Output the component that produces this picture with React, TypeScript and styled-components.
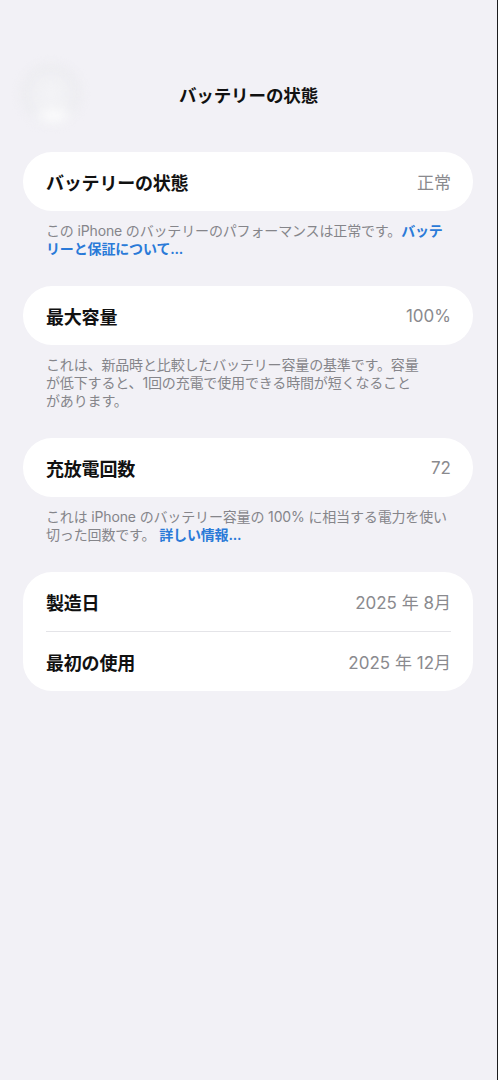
import React from "react";
import styled, { createGlobalStyle } from "styled-components";

const GlobalStyle = createGlobalStyle`
  html, body {
    margin: 0;
    padding: 0;
    background: #f2f1f6;
  }
  body {
    font-family: "Inter", "Noto Sans CJK JP", sans-serif;
    -webkit-font-smoothing: antialiased;
  }
`;

const Page = styled.div`
  min-height: 1080px;
  box-sizing: border-box;
  background: #f2f1f6;
  border-right: 1px solid #1c1c1e;
  display: flex;
  flex-direction: column;
`;

const NavBar = styled.div`
  display: grid;
  grid-template-columns: 90px 1fr 90px;
  align-items: center;
  height: 60px;
  margin-top: 63px;
`;

/* frosted back button, mostly washed out against the background */
const BackButton = styled.div`
  justify-self: start;
  margin-left: 20px;
  width: 62px;
  height: 62px;
  border-radius: 50%;
  background: radial-gradient(
      ellipse 40% 18% at 55% 86%,
      rgba(255, 255, 255, 0.95) 0%,
      rgba(255, 255, 255, 0) 100%
    ),
    radial-gradient(
      circle at 50% 50%,
      rgba(244, 244, 247, 1) 0%,
      rgba(236, 236, 240, 0.9) 65%,
      rgba(236, 236, 240, 0) 100%
    );
  filter: blur(4px);
`;

const NavTitle = styled.h1`
  margin: 0;
  text-align: center;
  font-family: "Noto Sans CJK JP", sans-serif;
  font-size: 17.5px;
  font-weight: 700;
  color: #111;
  letter-spacing: -0.1px;
`;

const Content = styled.div`
  display: flex;
  flex-direction: column;
  padding: 29px 24px 0 23px;
`;

const Section = styled.section`
  display: flex;
  flex-direction: column;
  margin-bottom: 28px;
`;

const Card = styled.div`
  background: #fff;
  border-radius: 29px;
  display: flex;
  flex-direction: column;
  padding: 0 22px 0 23px;
`;

const Row = styled.div<{ divided?: boolean }>`
  display: flex;
  align-items: center;
  justify-content: space-between;
  height: 59px;
  border-top: ${({ divided }) => (divided ? "1px solid #e4e4e8" : "none")};
`;

const Label = styled.span`
  font-family: "Noto Sans CJK JP", sans-serif;
  font-size: 18px;
  font-weight: 700;
  color: #111;
  letter-spacing: -0.2px;
`;

const Value = styled.span`
  font-family: "Inter", "Noto Sans CJK JP", sans-serif;
  font-size: 17px;
  font-weight: 400;
  color: #8a8a8e;
`;

const Footnote = styled.p`
  margin: 11px 0 0 23px;
  font-family: "Inter", "Noto Sans CJK JP", sans-serif;
  font-size: 14px;
  line-height: 18px;
  color: #85858a;
  letter-spacing: -0.15px;
`;

const Link = styled.span`
  color: #2a7ad8;
  font-weight: 600;
`;

type InfoRow = { label: string; value: string };

const dates: InfoRow[] = [
  { label: "製造日", value: "2025 年 8月" },
  { label: "最初の使用", value: "2025 年 12月" },
];

export default function App() {
  return (
    <Page>
      <GlobalStyle />
      <NavBar>
        <BackButton />
        <NavTitle>バッテリーの状態</NavTitle>
        <span />
      </NavBar>
      <Content>
        <Section>
          <Card>
            <Row>
              <Label>バッテリーの状態</Label>
              <Value>正常</Value>
            </Row>
          </Card>
          <Footnote>
            この iPhone のバッテリーのパフォーマンスは正常です。<Link>バッテ</Link>
            <br />
            <Link>リーと保証について...</Link>
          </Footnote>
        </Section>

        <Section>
          <Card>
            <Row>
              <Label>最大容量</Label>
              <Value>100%</Value>
            </Row>
          </Card>
          <Footnote>
            これは、新品時と比較したバッテリー容量の基準です。容量
            <br />
            が低下すると、1回の充電で使用できる時間が短くなること
            <br />
            があります。
          </Footnote>
        </Section>

        <Section>
          <Card>
            <Row>
              <Label>充放電回数</Label>
              <Value>72</Value>
            </Row>
          </Card>
          <Footnote>
            これは iPhone のバッテリー容量の 100% に相当する電力を使い
            <br />
            切った回数です。 <Link>詳しい情報...</Link>
          </Footnote>
        </Section>

        <Section>
          <Card>
            {dates.map((d, i) => (
              <Row key={d.label} divided={i > 0}>
                <Label>{d.label}</Label>
                <Value>{d.value}</Value>
              </Row>
            ))}
          </Card>
        </Section>
      </Content>
    </Page>
  );
}
